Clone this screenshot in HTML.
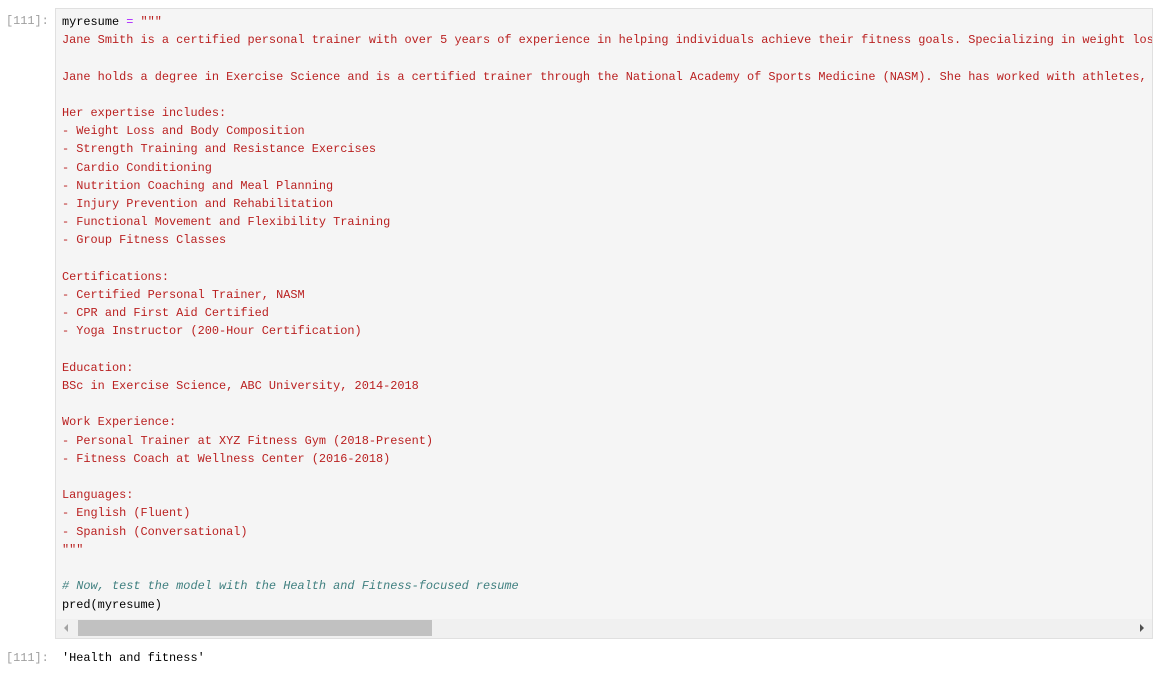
<!DOCTYPE html>
<html><head><meta charset="utf-8"><style>
html,body{margin:0;padding:0;background:#fff;width:1159px;height:676px;overflow:hidden}
body{font-family:"Liberation Mono",monospace;font-size:11.9px;}
.prompt{position:absolute;left:6px;color:#a0a0a0;font-size:11.9px}
.cell{position:absolute;left:55px;top:8px;width:1096px;height:629px;background:#f5f5f5;border:1px solid #e0e0e0;overflow:hidden}
pre{margin:0;position:absolute;left:6px;top:4px;font-family:"Liberation Mono",monospace;font-size:11.9px;line-height:18.2px;color:#000;white-space:pre}
.s{color:#ba2121}.c{color:#408080;font-style:italic}.o{color:#aa22ff}
.sb{position:absolute;left:0;bottom:0;width:1096px;height:19px;background:#f0f0f0}
.thumb{position:absolute;left:22px;top:1px;width:354px;height:16px;background:#c1c1c1}
.la{position:absolute;left:8px;top:5px;width:0;height:0;border-top:4px solid transparent;border-bottom:4px solid transparent;border-right:4px solid #a3a3a3}
.ra{position:absolute;right:8px;top:5px;width:0;height:0;border-top:4px solid transparent;border-bottom:4px solid transparent;border-left:4px solid #505050}
</style></head><body>
<div class="prompt" style="top:14px">[111]:</div>
<div class="cell">
<pre>myresume <span class="o">=</span> <span class="s">"""
Jane Smith is a certified personal trainer with over 5 years of experience in helping individuals achieve their fitness goals. Specializing in weight loss, strength training

Jane holds a degree in Exercise Science and is a certified trainer through the National Academy of Sports Medicine (NASM). She has worked with athletes, beginners and seniors

Her expertise includes:
- Weight Loss and Body Composition
- Strength Training and Resistance Exercises
- Cardio Conditioning
- Nutrition Coaching and Meal Planning
- Injury Prevention and Rehabilitation
- Functional Movement and Flexibility Training
- Group Fitness Classes

Certifications:
- Certified Personal Trainer, NASM
- CPR and First Aid Certified
- Yoga Instructor (200-Hour Certification)

Education:
BSc in Exercise Science, ABC University, 2014-2018

Work Experience:
- Personal Trainer at XYZ Fitness Gym (2018-Present)
- Fitness Coach at Wellness Center (2016-2018)

Languages:
- English (Fluent)
- Spanish (Conversational)
"""</span>

<span class="c"># Now, test the model with the Health and Fitness-focused resume</span>
pred(myresume)</pre>
<div class="sb"><div class="la"></div><div class="thumb"></div><div class="ra"></div></div>
</div>
<div class="prompt" style="top:651px">[111]:</div>
<div style="position:absolute;left:62px;top:651px;color:#000">'Health and fitness'</div>
</body></html>
